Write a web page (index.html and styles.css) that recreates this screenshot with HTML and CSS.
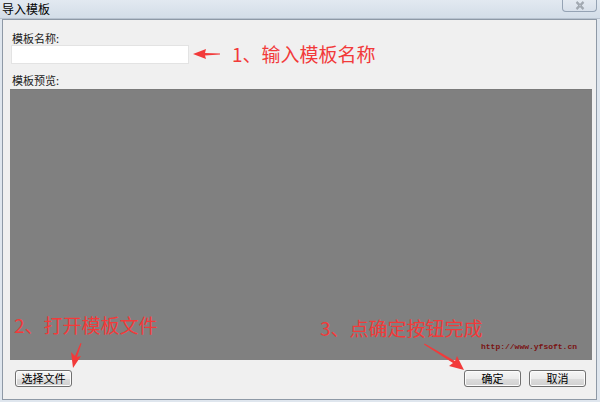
FILE: index.html
```html
<!DOCTYPE html>
<html lang="zh">
<head>
<meta charset="utf-8">
<title>导入模板</title>
<link rel="stylesheet" href="styles.css">
</head>
<body>
<div class="window">
  <div class="titlebar">
    <span class="title">导入模板</span>
    <div class="close">
      <svg width="14" height="9" viewBox="0 0 14 9"><path d="M3.5 1 L10.5 8 M10.5 1 L3.5 8" stroke="#7d858f" stroke-width="2" fill="none"/><path d="M3.5 1 L10.5 8 M10.5 1 L3.5 8" stroke="#e8ecf0" stroke-width="0.7" fill="none"/></svg>
    </div>
  </div>
  <div class="client">
    <div class="label">模板名称:</div>
    <div class="name-input"></div>
    <div class="label label-preview">模板预览:</div>
    <div class="preview"></div>
    <div class="buttons">
      <div class="btn">选择文件</div>
      <div class="spacer"></div>
      <div class="btn">确定</div>
      <div class="btn">取消</div>
    </div>
  </div>

  <div class="note note1">1、输入模板名称</div>
  <div class="note note2">2、打开模板文件</div>
  <div class="note note3">3、点确定按钮完成</div>
  <div class="watermark">http://www.yfsoft.cn</div>
  <svg class="arrows" width="600" height="402" viewBox="0 0 600 402">
    <polygon points="193,54 206,49 205,53 220,53.4 220,54.6 205,55.5 206,59" fill="#f23a3a"/>
    <polygon points="73,368 71,352 75,356 80.5,343 81.5,343.4 77,357 81,356" fill="#f23a3a"/>
    <polygon points="464,370 449,366 453,363 424,344.6 424.6,343.6 455,361 457,356" fill="#f23a3a"/>
  </svg>
</div>
</body>
</html>
```

FILE: styles.css
```css
* { box-sizing: border-box; }
html, body { margin: 0; padding: 0; }
body {
  width: 600px;
  height: 402px;
  overflow: hidden;
  font-family: "Noto Sans CJK SC", "Noto Sans", sans-serif;
  font-size: 11px;
  color: #000;
}
.window {
  position: relative;
  width: 600px;
  height: 402px;
  background: #dfe6ee;
  display: flex;
  flex-direction: column;
  padding: 0 3px 2px 2px;
}
.titlebar {
  height: 19px;
  display: flex;
  align-items: flex-start;
  justify-content: space-between;
  background: linear-gradient(to bottom, #e2e9f1, #d3dde8);
  margin: 0 -3px 0 -2px;
  border-bottom: 1px solid #b7c2cf;
}
.title {
  font-size: 12px;
  line-height: 17px;
  padding-left: 2px;
  color: #000;
}
.close {
  width: 35px;
  height: 12px;
  margin-right: 3px;
  border: 1px solid #95a3b4;
  border-top: none;
  border-radius: 0 0 4px 4px;
  background: linear-gradient(to bottom, #e4eaf1, #d8e0ea);
  display: flex;
  align-items: center;
  justify-content: center;
}
.close svg { display: block; }
.client {
  flex: 1;
  background: #f0f0f0;
  border: 1px solid #8e99a6;
  margin-top: 0;
  display: flex;
  flex-direction: column;
  padding: 11px 4px 10px 7px;
}
.label {
  line-height: 14px;
  height: 14px;
  padding-left: 2px;
  color: #1a1a1a;
}
.name-input {
  margin-left: 1px;
  width: 178px;
  height: 19px;
  background: #fff;
  border: 1px solid #e3e3e3;
}
.label-preview {
  margin-top: 9px;
}
.preview {
  margin-top: 2px;
  height: 271px;
  background: #808080;
  border-top: 1px solid #7a7a7a;
}
.buttons {
  margin-top: 10px;
  display: flex;
  gap: 8px;
  padding: 0 6px 0 5px;
}
.spacer { flex: 1; }
.btn {
  width: 57px;
  height: 17px;
  border: 1px solid #707070;
  border-radius: 3px;
  background: linear-gradient(to bottom, #f6f6f6 0%, #ebebeb 50%, #dddddd 51%, #d0d0d0 100%);
  box-shadow: inset 0 0 0 1px #fcfcfc;
  text-align: center;
  line-height: 15px;
  font-size: 11px;
}
.note {
  position: absolute;
  color: #f23a3a;
  font-size: 19px;
  line-height: 24px;
  white-space: nowrap;
}
.note1 { left: 232px; top: 42px; }
.note2 { left: 14px; top: 313px; }
.note3 { left: 320px; top: 316px; }
.watermark {
  position: absolute;
  left: 481px;
  top: 342px;
  font-family: "Liberation Mono", monospace;
  font-size: 8px;
  line-height: 10px;
  color: #7a1212;
  font-weight: bold;
}
.arrows {
  position: absolute;
  left: 0;
  top: 0;
  pointer-events: none;
}
```
